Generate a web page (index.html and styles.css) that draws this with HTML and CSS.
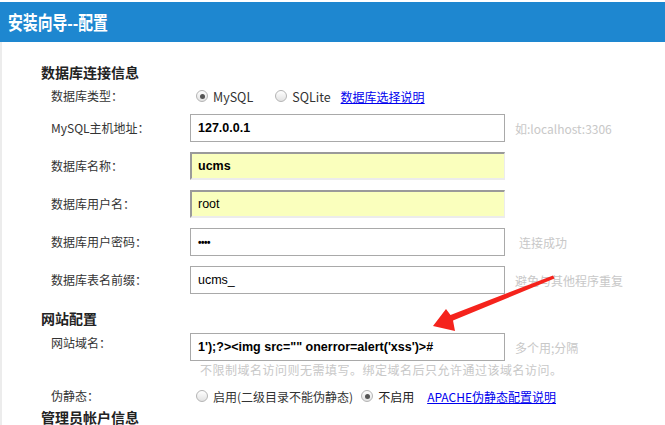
FILE: index.html
```html
<!DOCTYPE html>
<html lang="zh-CN">
<head>
<meta charset="utf-8">
<title>安装向导--配置</title>
<link rel="stylesheet" href="styles.css">
</head>
<body>
<header class="hd"><h1 class="hd-title">安装向导--配置</h1></header>
<main class="main">
  <h3 class="sec sec-first">数据库连接信息</h3>
  <div class="row row-radio">
    <span class="lbl">数据库类型：</span>
    <div class="radios">
      <span class="radio on"></span><span class="rt rt-latin">MySQL</span>
      <span class="radio radio-gap"></span><span class="rt rt-latin">SQLite</span>
      <a class="link link-db" href="#">数据库选择说明</a>
    </div>
  </div>
  <div class="row row-first">
    <span class="lbl">MySQL主机地址：</span>
    <div class="inp"><span class="val bold">127.0.0.1</span></div>
    <span class="hint">如:localhost:3306</span>
  </div>
  <div class="row">
    <span class="lbl">数据库名称：</span>
    <div class="inp auto"><span class="val bold">ucms</span></div>
  </div>
  <div class="row">
    <span class="lbl">数据库用户名：</span>
    <div class="inp auto"><span class="val">root</span></div>
  </div>
  <div class="row">
    <span class="lbl">数据库用户密码：</span>
    <div class="inp"><span class="val pw">••••</span></div>
    <span class="hint hint-ok">连接成功</span>
  </div>
  <div class="row">
    <span class="lbl">数据库表名前缀：</span>
    <div class="inp"><span class="val">ucms_</span></div>
    <span class="hint">避免与其他程序重复</span>
  </div>

  <h3 class="sec sec-site">网站配置</h3>
  <div class="row row-domain">
    <span class="lbl lbl-top">网站域名：</span>
    <div class="inp"><span class="val bold">1');?&gt;&lt;img src="" onerror=alert('xss')&gt;#</span></div>
    <span class="hint">多个用;分隔</span>
  </div>
  <p class="subhint">不限制域名访问则无需填写。绑定域名后只允许通过该域名访问。</p>
  <div class="row row-rewrite">
    <span class="lbl">伪静态：</span>
    <div class="radios">
      <span class="radio"></span><span class="rt">启用(二级目录不能伪静态)</span>
      <span class="radio on radio-gap2"></span><span class="rt rt-dark">不启用</span>
      <a class="link link-ap" href="#">APACHE伪静态配置说明</a>
    </div>
  </div>
  <h3 class="sec sec-admin">管理员帐户信息</h3>
</main>
<svg class="arrow" width="665" height="425" viewBox="0 0 665 425" aria-hidden="true">
  <polygon points="553,275.5 554.5,278.5 453,320.5 455,331 433,326 446,309 450.5,315" fill="#f5231c"/>
</svg>
</body>
</html>
```

FILE: styles.css
```css
html, body {
  margin: 0;
  padding: 0;
  background: #fff;
}
body {
  padding-top: 2px;
  font-family: "Noto Sans CJK SC", "Noto Sans", sans-serif;
  color: #333;
  overflow: hidden;
  height: 423px;
}
.hd {
  height: 40px;
  background: #1e87d0;
  padding-left: 8px;
  display: flex;
  align-items: center;
}
.hd-title {
  margin: 0;
  color: #fff;
  font-size: 19px;
  font-weight: bold;
  line-height: 20px;
  display: inline-block;
  transform: scaleX(0.78);
  transform-origin: left center;
  white-space: nowrap;
}
.main {
  border-left: 2px solid #ececec;
  padding-left: 39px;
  padding-top: 20px;
  display: flex;
  flex-direction: column;
  min-height: 400px;
}
.sec {
  margin: 0;
  font-size: 14px;
  line-height: 20px;
  height: 20px;
  font-weight: bold;
  color: #222;
}
.sec-site { margin-top: 14px; }
.sec-admin { margin-top: 2px; }
.row {
  display: flex;
  align-items: center;
  height: 28px;
  margin-top: 10px;
}
.row-radio {
  height: 20px;
  margin-top: 4px;
}
.row-first { margin-top: 8px; }
.lbl {
  width: 149px;
  flex: none;
  box-sizing: border-box;
  padding-left: 10px;
  font-size: 12px;
  line-height: 20px;
  color: #333;
  white-space: nowrap;
}
.lbl-top { align-self: flex-start; }
.radios {
  display: flex;
  align-items: center;
  padding-left: 6px;
  font-size: 12px;
  white-space: nowrap;
}
.radio {
  width: 10px;
  height: 10px;
  border-radius: 50%;
  border: 1px solid #b4b4b4;
  background: linear-gradient(#fff, #e2e2e2);
  box-sizing: content-box;
  position: relative;
  flex: none;
}
.radio.on::after {
  content: "";
  position: absolute;
  left: 2.5px;
  top: 2.5px;
  width: 5px;
  height: 5px;
  border-radius: 50%;
  background: #555;
}
.rt {
  margin-left: 5px;
  color: #333;
}
.rt-latin { font-size: 12.5px; }
.rt-dark { color: #222; }
.radio-gap { margin-left: 22px; }
.radio-gap2 { margin-left: 8px; }
.link {
  color: #0000ee;
  text-decoration: underline;
  font-size: 12px;
}
.link-db { margin-left: 10px; }
.link-ap { margin-left: 13px; }
.inp {
  width: 315px;
  height: 28px;
  box-sizing: border-box;
  border: 1px solid #a9a9a9;
  background: #fff;
  display: flex;
  align-items: center;
  padding-left: 7px;
  flex: none;
}
.inp.auto {
  background: #faffbd;
  border-width: 2px 1px 2px 2px;
  border-color: #9a9a9a #ececec #ececec #9a9a9a;
  padding-left: 6px;
}
.val {
  font-family: "Liberation Sans", Arial, sans-serif;
  font-size: 12.5px;
  color: #000;
  white-space: nowrap;
}
.bold { font-weight: bold; }
.pw {
  font-size: 10px;
  font-weight: bold;
  letter-spacing: -0.5px;
}
.hint {
  margin-left: 10px;
  font-size: 12px;
  color: #c8c8c8;
  white-space: nowrap;
}
.hint-ok { margin-left: 14px; }
.row-domain { margin-top: 5px; }
.subhint {
  margin: 0;
  padding-left: 159px;
  font-size: 12px;
  letter-spacing: 0.5px;
  line-height: 18px;
  height: 18px;
  color: #c8c8c8;
  white-space: nowrap;
}
.row-rewrite {
  height: 18px;
  margin-top: 8px;
}
.arrow {
  position: absolute;
  left: 0;
  top: 0;
  pointer-events: none;
}
```
